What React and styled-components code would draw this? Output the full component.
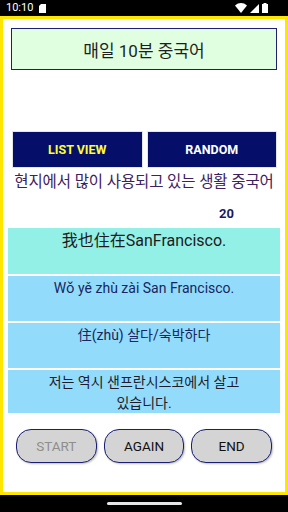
import React from "react";
import styled, {createGlobalStyle} from "styled-components";

const GlobalStyle = createGlobalStyle`
    body {
        margin: 0;
        background: #000;
        font-family: Roboto, "Noto Sans CJK KR", sans-serif;
    }
`;

const cards = [
    {text: "我也住在SanFrancisco.", bg: "#93f0e6", color: "#1c1c1c", size: 16, height: 46, cjk: "SC"},
    {text: "Wǒ yě zhù zài San Francisco.", bg: "#93dbfb", color: "#17265e", size: 14, height: 45},
    {text: "住(zhù) 살다/숙박하다", bg: "#93dbfb", color: "#17265e", size: 14, height: 45},
    {text: "저는 역시 샌프란시스코에서 살고 있습니다.", bg: "#93dbfb", color: "#1c1c2c", size: 14, height: 43},
];

function App() {
    return (
        <Screen>
            <GlobalStyle />
            <StatusBar>
                <Time>10:10</Time>
                <svg width="7" height="9" viewBox="0 0 7 9">
                    <path d="M2 0H7V9H0V2Z" fill="#fff" />
                </svg>
                <Spacer />
                <svg width="12" height="10" viewBox="0 0 12 10">
                    <path d="M0 2.5C3.5 -0.8 8.5 -0.8 12 2.5L6 10Z" fill="#fff" />
                </svg>
                <svg width="9" height="9" viewBox="0 0 9 9">
                    <path d="M9 0V9H0Z" fill="#fff" />
                </svg>
                <svg width="6" height="10" viewBox="0 0 6 10">
                    <path d="M1.5 0H4.5V1H6V10H0V1H1.5Z" fill="#fff" />
                </svg>
            </StatusBar>
            <Frame>
                <TitleBox>매일 10분 중국어</TitleBox>
                <ButtonRow>
                    <NavyButton $accent>LIST VIEW</NavyButton>
                    <NavyButton>RANDOM</NavyButton>
                </ButtonRow>
                <Subtitle>현지에서 많이 사용되고 있는 생활 중국어</Subtitle>
                <Counter>20</Counter>
                <CardList>
                    {cards.map((c, i) => (
                        <Card key={i} $bg={c.bg} $color={c.color} $size={c.size} $h={c.height} $cjk={c.cjk}>
                            {c.text}
                        </Card>
                    ))}
                </CardList>
                <Spacer />
                <ControlRow>
                    <PillButton $disabled>START</PillButton>
                    <PillButton>AGAIN</PillButton>
                    <PillButton>END</PillButton>
                </ControlRow>
            </Frame>
            <NavBar>
                <HomeBar />
            </NavBar>
        </Screen>
    )
}

const Screen = styled.div`
    width: 288px;
    height: 512px;
    display: flex;
    flex-direction: column;
    background: #000;
    overflow: hidden;
`;

const StatusBar = styled.div`
    height: 16px;
    display: flex;
    align-items: center;
    gap: 3px;
    padding: 0 20px 0 6px;
    svg { display: block; }
    svg:first-of-type { margin-left: 3px; }
`;

const Time = styled.span`
    color: #fff;
    font-family: Roboto, sans-serif;
    font-size: 11px;
    line-height: 16px;
`;

const Spacer = styled.div`
    flex: 1;
`;

const Frame = styled.div`
    height: 479px;
    box-sizing: border-box;
    border: 3px solid #ffe600;
    background: #fff;
    display: flex;
    flex-direction: column;
`;

const TitleBox = styled.div`
    margin: 9px 8px 0 8px;
    height: 42px;
    box-sizing: border-box;
    border: 1px solid #1f1f6e;
    background: #e0ffe0;
    display: flex;
    align-items: center;
    justify-content: center;
    font-size: 17px;
    color: #1e1e1e;
    font-family: Roboto, "Noto Sans CJK KR", sans-serif;
`;

const ButtonRow = styled.div`
    margin: 62px 9px 0 10px;
    display: grid;
    grid-template-columns: 1fr 1fr;
    gap: 6px;
`;

const NavyButton = styled.div`
    height: 35px;
    background: #050f6a;
    box-shadow: 0 0 0 1px #e4e4ec;
    display: flex;
    align-items: center;
    justify-content: center;
    color: ${p => p.$accent ? "#ffff33" : "#fff"};
    font-family: Roboto, sans-serif;
    font-weight: bold;
    font-size: 12.5px;
`;

const Subtitle = styled.div`
    margin-top: 5px;
    height: 20px;
    line-height: 20px;
    text-align: center;
    font-size: 15.5px;
    color: #3d2160;
    letter-spacing: -0.1px;
    white-space: nowrap;
`;

const Counter = styled.div`
    margin-top: 14px;
    padding-left: 216px;
    height: 16px;
    line-height: 16px;
    font-size: 13px;
    font-weight: bold;
    color: #1a1a5c;
    font-family: Roboto, sans-serif;
`;

const CardList = styled.div`
    margin: 6px 5px 0 5px;
    display: flex;
    flex-direction: column;
    gap: 2px;
`;

const Card = styled.div`
    height: ${p => p.$h}px;
    background: ${p => p.$bg};
    color: ${p => p.$color};
    font-size: ${p => p.$size}px;
    font-family: Roboto, ${p => p.$cjk ? `"Noto Sans CJK ${p.$cjk}"` : `"Noto Sans CJK KR"`}, sans-serif;
    text-align: center;
    line-height: 21px;
    padding: 2px 30px 0;
    box-sizing: border-box;
    overflow: hidden;
    word-break: keep-all;
`;

const ControlRow = styled.div`
    margin: 0 13px 29px;
    display: grid;
    grid-template-columns: repeat(3, 1fr);
    gap: 7px;
`;

const PillButton = styled.div`
    height: 34px;
    box-sizing: border-box;
    border: 1px solid #1b1f72;
    border-radius: 15px;
    background: #d4d4d4;
    box-shadow: 1px 1px 2px rgba(0, 0, 0, 0.25);
    display: flex;
    align-items: center;
    justify-content: center;
    font-family: Roboto, sans-serif;
    font-size: 13.5px;
    color: ${p => p.$disabled ? "#8e8e8e" : "#111"};
`;

const NavBar = styled.div`
    flex: 1;
    display: flex;
    align-items: center;
    justify-content: center;
`;

const HomeBar = styled.div`
    width: 75px;
    height: 3px;
    border-radius: 2px;
    background: #e6e6e6;
`;

export default App;
